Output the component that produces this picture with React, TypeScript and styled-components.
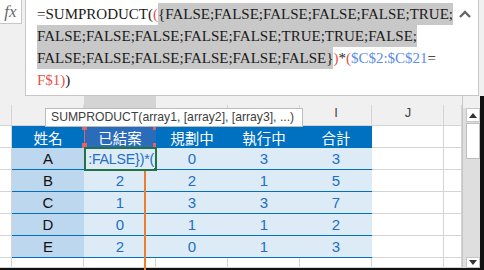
import styled, { createGlobalStyle } from 'styled-components';

const GlobalStyle = createGlobalStyle`
  * { box-sizing: border-box; }
  body { margin: 0; background: #ffffff; }
`;

const Page = styled.div`
  position: relative;
  width: 484px;
  height: 270px;
  overflow: hidden;
  background: #f0f0f0;
  font-family: 'Liberation Sans', Arial, sans-serif;
`;

// formula bar
const FormulaBar = styled.div`
  display: flex;
  height: 96px;
  padding-right: 5px;
`;

const FxBox = styled.div`
  width: 22px;
  height: 24px;
  margin-right: 3px;
  background: #ffffff;
  border-right: 1px solid #c6c6c6;
  border-bottom: 1px solid #c6c6c6;
  display: flex;
  align-items: center;
  justify-content: center;
  font-family: 'Liberation Serif', serif;
  font-style: italic;
  font-size: 17px;
  color: #6a6a6a;
`;

const FormulaBox = styled.div`
  position: relative;
  flex: 1;
  height: 96px;
  background: #ffffff;
  border: 1px solid #c6c6c6;
  border-top: 0;
  padding: 3px 0 0 11px;
  font-family: 'Liberation Serif', 'Noto Sans CJK TC', serif;
  font-size: 15px;
  color: #1a1a1a;
`;

const Line = styled.div`
  display: flex;
  height: 22px;
  line-height: 22px;
  white-space: pre;
`;

const Seg = styled.span<{ $tone?: 'red' | 'blue'; $hl?: boolean }>`
  color: ${(p) => (p.$tone === 'red' ? '#e8524c' : p.$tone === 'blue' ? '#5a8de6' : '#1a1a1a')};
  background: ${(p) => (p.$hl ? '#c8c8c8' : 'transparent')};
`;

const Collapse = styled.svg`
  position: absolute;
  top: 10px;
  right: 6px;
`;

// sheet
const Sheet = styled.div`
  display: flex;
  height: 174px;
  border-right: 4px solid #111;
  border-bottom: 2px solid #111;
`;

const Grid = styled.div`
  display: grid;
  grid-template-columns: 12px repeat(6, 72px) 18px;
  grid-template-rows: 30px repeat(6, 22px) 10px;
  width: 462px;
  overflow: hidden;
`;

const ColHead = styled.div<{ $active?: boolean }>`
  position: relative;
  background: ${(p) => (p.$active ? '#d4d4d4' : '#f0f0f0')};
  border-bottom: 1px solid #d4d4d4;
  text-align: center;
  padding-top: 9px;
  line-height: 16px;
  font-size: 13px;
  color: #444;
  &::after {
    content: '';
    position: absolute;
    right: 0;
    top: 9px;
    bottom: 0;
    width: 1px;
    background: #d4d4d4;
  }
`;

const RowHead = styled.div`
  background: #ffffff;
  border-right: 1px solid #d4d4d4;
  border-bottom: 1px solid #d4d4d4;
`;

const Empty = styled.div`
  background: #ffffff;
  border-right: 1px solid #d4d4d4;
  border-bottom: 1px solid #d4d4d4;
`;

const Cell = styled.div<{ $kind: 'head' | 'name' | 'num'; $sel?: boolean }>`
  position: relative;
  display: flex;
  align-items: center;
  justify-content: center;
  font-family: ${(p) =>
    p.$kind === 'head' ? "'Noto Sans CJK TC', sans-serif" : "'Liberation Sans', Arial, sans-serif"};
  font-size: ${(p) => (p.$kind === 'head' ? '14.5px' : '15px')};
  background: ${(p) =>
    p.$kind === 'head' ? (p.$sel ? '#2a6cb9' : '#0070c0') : p.$kind === 'name' ? '#bdd7ee' : '#ddebf7'};
  color: ${(p) => (p.$kind === 'head' ? '#ffffff' : p.$kind === 'name' ? '#111' : '#1e6fc3')};
  border-bottom: ${(p) => (p.$kind === 'head' ? '0' : '1px solid #0070c0')};
`;

const RefFrame = styled.div`
  position: absolute;
  left: 0;
  top: 0;
  width: 73px;
  height: 22px;
  border-left: 1px solid #e0606a;
  border-right: 1px solid #e0606a;
`;

const Handle = styled.span<{ $x: number; $y: number }>`
  position: absolute;
  left: ${(p) => p.$x}px;
  top: ${(p) => p.$y}px;
  width: 5px;
  height: 5px;
  background: #e8606a;
`;

const ActiveBox = styled.div`
  position: absolute;
  left: 0;
  top: -1px;
  width: 73px;
  height: 24px;
  border: 2px solid #217346;
  display: flex;
  align-items: center;
  justify-content: flex-end;
  overflow: hidden;
  padding-right: 1px;
  white-space: nowrap;
  font-size: 14.2px;
  letter-spacing: -0.2px;
  color: #1e6fc3;
  z-index: 2;
`;

const FillHandle = styled.span`
  position: absolute;
  right: -4px;
  bottom: -4px;
  width: 6px;
  height: 6px;
  background: #217346;
  border: 1px solid #ffffff;
  z-index: 3;
`;

const DragLine = styled.div`
  position: absolute;
  left: 144px;
  top: 171px;
  width: 2px;
  height: 100px;
  background: #ed7d31;
  z-index: 4;
`;

const Tip = styled.div`
  position: absolute;
  left: 45px;
  top: 108px;
  width: 258px;
  height: 19px;
  background: #ffffff;
  border: 1px solid #bcbcbc;
  padding-left: 5px;
  font-size: 12.2px;
  line-height: 17px;
  color: #404040;
  white-space: nowrap;
  z-index: 5;
`;

// scrollbar
const ScrollBar = styled.div`
  width: 18px;
  display: flex;
  flex-direction: column;
  border-left: 1px solid #c6c6c6;
  background: #dedede;
`;

const ScrollCap = styled.div`
  height: 12px;
  background: #f0f0f0;
`;

const ScrollBtn = styled.div<{ $h: number }>`
  height: ${(p) => p.$h}px;
  margin-left: 3px;
  background: #ffffff;
  border: 1px solid #c6c6c6;
  display: flex;
  align-items: center;
  justify-content: center;
`;

const Thumb = styled.div`
  height: 36px;
  margin: 1px 0 0 3px;
  background: #ffffff;
  border: 1px solid #bdbdbd;
`;

const Track = styled.div`
  flex: 1;
`;

// E..H are hidden under the tooltip, K is cut off
const colLetters = ['', '', '', '', 'I', 'J', ''];
const heads = ['姓名', '已結案', '規劃中', '執行中', '合計'];
const rows: (string | null)[][] = [
  ['A', null, '0', '3', '3'],
  ['B', '2', '2', '1', '5'],
  ['C', '1', '3', '3', '7'],
  ['D', '0', '1', '1', '2'],
  ['E', '2', '0', '1', '3'],
];

function App() {
  return (
    <Page>
      <GlobalStyle />
      <FormulaBar>
        <FxBox>fx</FxBox>
        <FormulaBox>
          <Line>
            <Seg>=SUMPRODUCT(</Seg>
            <Seg $tone="red">(</Seg>
            <Seg $hl>{'{FALSE;FALSE;FALSE;FALSE;FALSE;TRUE;'}</Seg>
          </Line>
          <Line>
            <Seg $hl>FALSE;FALSE;FALSE;FALSE;FALSE;TRUE;TRUE;FALSE;</Seg>
          </Line>
          <Line>
            <Seg $hl>{'FALSE;FALSE;FALSE;FALSE;FALSE;FALSE}'}</Seg>
            <Seg $tone="red">)</Seg>
            <Seg>*</Seg>
            <Seg $tone="red">(</Seg>
            <Seg $tone="blue">$C$2:$C$21</Seg>
            <Seg>=</Seg>
          </Line>
          <Line>
            <Seg $tone="red">F$1)</Seg>
            <Seg>)</Seg>
          </Line>
          <Collapse width="14" height="9" viewBox="0 0 14 9">
            <polyline points="2,7 7,2 12,7" fill="none" stroke="#666" strokeWidth="2.4" />
          </Collapse>
        </FormulaBox>
      </FormulaBar>

      <Sheet>
        <Grid>
          <ColHead />
          {colLetters.map((c, i) => (
            <ColHead key={'col' + i} $active={i === 1}>
              {c}
            </ColHead>
          ))}

          <RowHead />
          {heads.map((h, i) => (
            <Cell key={h} $kind="head" $sel={i === 1}>
              {h}
              {i === 1 && (
                <RefFrame>
                  <Handle $x={-3} $y={-1} />
                  <Handle $x={68} $y={-1} />
                  <Handle $x={-3} $y={17} />
                  <Handle $x={68} $y={17} />
                </RefFrame>
              )}
            </Cell>
          ))}
          <Empty />
          <Empty />

          {rows.map((r) => (
            <>
              <RowHead key={r[0] + '-rh'} />
              {r.map((v, i) => (
                <Cell key={r[0] + '-' + i} $kind={i === 0 ? 'name' : 'num'}>
                  {v === null ? (
                    <ActiveBox>
                      :FALSE{'}'})*(
                      <FillHandle />
                    </ActiveBox>
                  ) : (
                    v
                  )}
                </Cell>
              ))}
              <Empty key={r[0] + '-j'} />
              <Empty key={r[0] + '-k'} />
            </>
          ))}

          <RowHead />
          {colLetters.map((_, i) => (
            <Empty key={'last-' + i} />
          ))}
        </Grid>
        <ScrollBar>
          <ScrollCap />
          <ScrollBtn $h={14}>
            <svg width="8" height="5" viewBox="0 0 8 5">
              <polygon points="0,5 4,0 8,5" fill="#333" />
            </svg>
          </ScrollBtn>
          <Thumb />
          <Track />
          <ScrollBtn $h={11}>
            <svg width="8" height="5" viewBox="0 0 8 5">
              <polygon points="0,0 8,0 4,5" fill="#333" />
            </svg>
          </ScrollBtn>
        </ScrollBar>
      </Sheet>

      <DragLine />
      <Tip>SUMPRODUCT(array1, [array2], [array3], ...)</Tip>
    </Page>
  );
}

export default App;
